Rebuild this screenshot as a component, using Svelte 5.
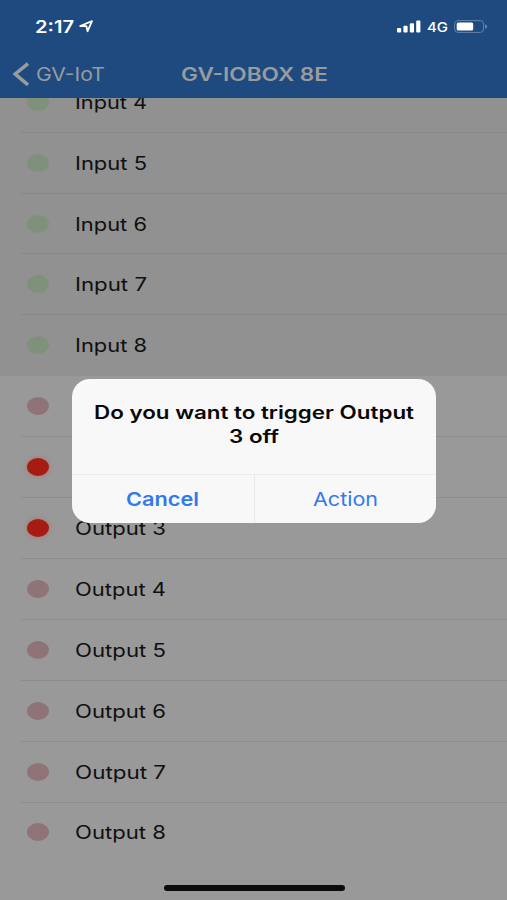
<script>
  const inputs = [4, 5, 6, 7, 8];
  const outputs = [1, 2, 3, 4, 5, 6, 7, 8];
  const active = [2, 3];
  // Rows that lie entirely behind the alert need no label.
  const covered = [1, 2];
</script>

{#snippet label(text, width, size, weight)}
  <svg class="label" {width} height="24" font-size={size} font-weight={weight}>
    <text x="0" y="18" textLength={width} lengthAdjust="spacingAndGlyphs">{text}</text>
  </svg>
{/snippet}

<main class="screen">
  <header>
    <div class="status">
      <div class="time">
        {@render label('2:17', 39, 17, 600)}
        <svg class="location" width="15" height="13" viewBox="0 0 15 13">
          <path d="M1.2 6 13 1.2 8.6 11.2 7.4 6.2Z" fill="none" stroke="#fff" stroke-width="1.8" stroke-linejoin="round" />
        </svg>
      </div>
      <div class="indicators">
        <svg width="24" height="13" viewBox="0 0 24 13" fill="#fff">
          <rect x="0" y="8" width="4.2" height="4.5" rx="1" />
          <rect x="6.4" y="5.8" width="4.2" height="6.7" rx="1" />
          <rect x="12.8" y="3.2" width="4.2" height="9.3" rx="1" />
          <rect x="19.2" y="0.4" width="4.2" height="12.1" rx="1" />
        </svg>
        <div class="network">{@render label('4G', 21, 13.4, 500)}</div>
        <svg class="battery" width="34" height="13" viewBox="0 0 34 13">
          <rect x="0.6" y="0.6" width="29" height="11.8" rx="3.4" fill="none" stroke="#6482ab" stroke-width="1" />
          <rect x="2.7" y="2.4" width="16.5" height="8.2" rx="1.6" fill="#fff" />
          <path d="M31 4.2Q33.2 5 33.2 6.5T31 8.8Z" fill="#6482ab" />
        </svg>
      </div>
    </div>
    <nav>
      <svg class="chevron" width="18" height="26" viewBox="0 0 18 26">
        <path d="M16 2.6 3.2 13 16 23.8" fill="none" stroke="#999b9e" stroke-width="3.5" />
      </svg>
      <div class="back">{@render label('GV-IoT', 69, 18.6, 400)}</div>
      <div class="title">{@render label('GV-IOBOX 8E', 147, 18.2, 600)}</div>
    </nav>
  </header>

  <section class="viewport">
    <ul class="inputs">
      {#each inputs as n}
        <li>
          <span class="dot green"></span>
          <div class="cell">{@render label(`Input ${n}`, 72, 18.2, 400)}</div>
        </li>
      {/each}
    </ul>
    <ul class="outputs">
      {#each outputs as n}
        <li>
          <span class="dot" class:on={active.includes(n)}></span>
          {#if !covered.includes(n)}
            <div class="cell">{@render label(`Output ${n}`, 91, 18.2, 400)}</div>
          {/if}
        </li>
      {/each}
    </ul>
  </section>

  <div class="home"></div>

  <div class="alert" role="alertdialog">
    <div class="message">
      {@render label('Do you want to trigger Output', 320, 18.2, 600)}
      {@render label('3 off', 50, 18.2, 600)}
    </div>
    <div class="actions">
      <div class="button">{@render label('Cancel', 73, 19, 600)}</div>
      <div class="button">{@render label('Action', 65, 19, 400)}</div>
    </div>
  </div>
</main>

<style>
  :global(body) {
    margin: 0;
  }
  .screen {
    position: relative;
    width: 507px;
    height: 900px;
    overflow: hidden;
    display: flex;
    flex-direction: column;
    background: #999999;
    font-family: Inter, 'Liberation Sans', sans-serif;
    color: #101010;
  }
  .label {
    display: block;
    flex: none;
    overflow: visible;
    fill: currentColor;
  }
  header {
    flex: none;
    height: 98px;
    box-sizing: border-box;
    background: #1e4a80;
    border-bottom: 1px solid #24466f;
    z-index: 1;
  }
  .status {
    height: 50px;
    box-sizing: border-box;
    padding: 15px 19px 0 35px;
    display: flex;
    justify-content: space-between;
    color: #fff;
  }
  .time,
  .indicators {
    display: flex;
    align-items: flex-start;
  }
  .location {
    margin: 5px 0 0 5px;
  }
  .indicators > svg {
    margin-top: 5px;
  }
  .network {
    margin: -1px 6px 0 6px;
  }
  nav {
    display: flex;
    align-items: flex-start;
    padding: 11px 0 0 12px;
    color: #999b9e;
  }
  .back {
    margin: 2px 0 0 6px;
  }
  .title {
    margin: 2px 0 0 76px;
  }
  .viewport {
    flex: 1;
    overflow: hidden;
  }
  ul {
    list-style: none;
    margin: 0;
    padding: 0;
  }
  .inputs {
    margin-top: -26.2px;
    background: #919191;
  }
  .outputs {
    background: #999999;
  }
  li {
    height: 60.9px;
    display: flex;
    align-items: center;
    padding-left: 27px;
    background: linear-gradient(#8c8c8c, #8c8c8c) 21px 100% / 100% 1px no-repeat;
  }
  .inputs li {
    background-image: linear-gradient(#888888, #888888);
  }
  .inputs li:last-child,
  .outputs li:last-child {
    background: none;
  }
  .dot {
    width: 22px;
    height: 18px;
    margin: 0 26px 1px 0;
    border-radius: 50%;
    background: #8f7376;
  }
  .cell {
    padding-top: 1px;
  }
  .green {
    background: #7f917a;
  }
  .on {
    background: #a61c13;
    box-shadow: 0 0 5px 0 #b0716c;
  }
  .home {
    position: absolute;
    left: 164px;
    top: 885px;
    width: 181px;
    height: 6px;
    border-radius: 3px;
    background: #0c0c0c;
  }
  .alert {
    position: absolute;
    left: 72px;
    top: 378.5px;
    width: 364px;
    height: 144px;
    border-radius: 18px;
    background: #f8f8f8;
    display: flex;
    flex-direction: column;
    color: #080808;
  }
  .message {
    height: 95px;
    padding-top: 22px;
    box-sizing: border-box;
    display: flex;
    flex-direction: column;
    align-items: center;
  }
  .message .label + .label {
    margin-top: 0.6px;
  }
  .actions {
    flex: 1;
    display: flex;
    border-top: 1px solid #ececec;
    color: #3478ed;
  }
  .button {
    flex: 1;
    display: flex;
    justify-content: center;
    padding-top: 13.3px;
  }
  .button + .button {
    border-left: 1px solid #e9e9e9;
  }
</style>
